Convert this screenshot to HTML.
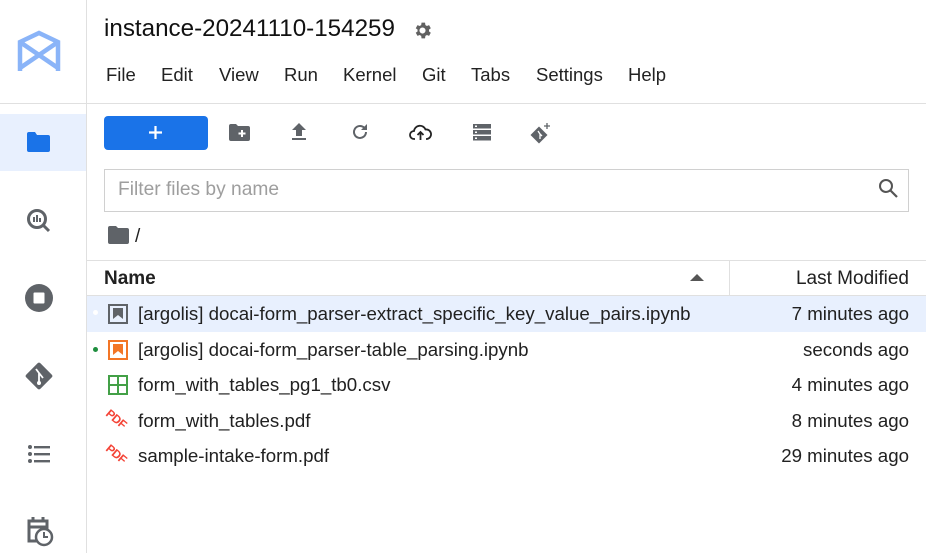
<!DOCTYPE html>
<html><head><style>
*{box-sizing:border-box;margin:0;padding:0}
body{width:926px;height:553px;overflow:hidden;background:#fff;font-family:"Liberation Sans",sans-serif;color:#212121;position:relative}
.abs{position:absolute}
.vl{left:86px;top:0;width:1px;height:553px;background:#e0e0e0}
.hl{left:0;top:103px;width:926px;height:1px;background:#e0e0e0}
.title{left:104px;top:15px;font-size:24.2px;color:#111}
.menu{top:64px;font-size:18.5px;color:#222}
.row{left:87px;width:839px;height:36px;font-size:18.7px;line-height:36px}
.row .n{position:absolute;left:51px}
.row .d{position:absolute;right:17px}
.pdf{position:absolute;left:18px;top:9px;color:#f44336;font-size:12px;font-weight:bold;transform:rotate(40deg);letter-spacing:-0.5px;line-height:14px}
</style></head><body>
<div class="abs vl"></div><div class="abs hl"></div>
<svg class="abs" style="left:17px;top:30px" width="44" height="42" viewBox="0 0 44 42"><path d="M3 41V12L22 3L41 12V41M3 12L41 38M41 12L3 38" fill="none" stroke="#8ab4f8" stroke-width="4.5"/></svg>
<div class="abs title">instance-20241110-154259</div>
<svg class="abs" style="left:412px;top:20px" width="21" height="21" viewBox="0 0 24 24"><path fill="#616161" d="M19.4 13a7.5 7.5 0 000-2l2.1-1.6-2-3.5-2.5 1a7 7 0 00-1.7-1L14.9 3h-4l-.4 2.9a7 7 0 00-1.7 1l-2.5-1-2 3.5L6.4 11a7.5 7.5 0 000 2l-2.1 1.6 2 3.5 2.5-1a7 7 0 001.7 1l.4 2.9h4l.4-2.9a7 7 0 001.7-1l2.5 1 2-3.5zM12 15.5a3.5 3.5 0 110-7 3.5 3.5 0 010 7z"/></svg>
<div class="abs menu" style="left:106px">File</div>
<div class="abs menu" style="left:161px">Edit</div>
<div class="abs menu" style="left:219px">View</div>
<div class="abs menu" style="left:284px">Run</div>
<div class="abs menu" style="left:343px">Kernel</div>
<div class="abs menu" style="left:422px">Git</div>
<div class="abs menu" style="left:471px">Tabs</div>
<div class="abs menu" style="left:536px">Settings</div>
<div class="abs menu" style="left:628px">Help</div>
<!-- sidebar -->
<div class="abs" style="left:0;top:114px;width:86px;height:57px;background:#e8f0fe"></div>
<svg class="abs" style="left:26px;top:131px" width="25" height="22" viewBox="0 0 25 22"><path fill="#1a73e8" d="M1 3a2 2 0 012-2h6l2 3h11a2 2 0 012 2v13a2 2 0 01-2 2H3a2 2 0 01-2-2z"/></svg>
<svg class="abs" style="left:26px;top:208px" width="26" height="26" viewBox="0 0 26 26"><circle cx="11" cy="11" r="8.5" fill="none" stroke="#5f6368" stroke-width="3"/><path d="M17 17l6 6" stroke="#5f6368" stroke-width="3"/><path d="M8 9v5M11 7v7M14 10v4" stroke="#5f6368" stroke-width="2"/></svg>
<svg class="abs" style="left:25px;top:284px" width="28" height="28"><circle cx="14" cy="14" r="14" fill="#5f6368"/><rect x="8.5" y="8.5" width="11" height="11" rx="1" fill="#fff"/></svg>
<svg class="abs" style="left:24px;top:361px" width="30" height="30" viewBox="0 0 30 30"><rect x="5" y="5" width="20" height="20" rx="2" transform="rotate(45 15 15)" fill="#5f6368"/><path d="M12 8l3 4v10M15 12l4 5" stroke="#fff" stroke-width="1.8" fill="none"/><circle cx="15" cy="22" r="2" fill="#fff"/></svg>
<svg class="abs" style="left:27px;top:444px" width="24" height="20"><g fill="#5f6368"><circle cx="3" cy="3" r="2"/><circle cx="3" cy="10" r="2"/><circle cx="3" cy="17" r="2"/><rect x="7" y="2" width="16" height="2.4"/><rect x="7" y="9" width="16" height="2.4"/><rect x="7" y="16" width="16" height="2.4"/></g></svg>
<svg class="abs" style="left:25px;top:515px" width="30" height="34" viewBox="0 0 30 34"><path d="M13 26H4V6h18v8M4 12h18M8 2v5M18 2v5" fill="none" stroke="#5f6368" stroke-width="3"/><circle cx="19" cy="22" r="8" fill="#fff" stroke="#5f6368" stroke-width="2.5"/><path d="M19 17v5h4" fill="none" stroke="#5f6368" stroke-width="2"/></svg>
<!-- toolbar -->
<div class="abs" style="left:104px;top:116px;width:104px;height:34px;background:#1a73e8;border-radius:4px"></div>
<svg class="abs" style="left:148px;top:125px" width="15" height="15"><path d="M7.5 1v13M1 7.5h13" stroke="#fff" stroke-width="2.2"/></svg>
<svg class="abs" style="left:229px;top:124px" width="21" height="17" viewBox="0 0 21 17"><path fill="#5f6368" d="M0 2a2 2 0 012-2h5l2 2h10a2 2 0 012 2v11a2 2 0 01-2 2H2a2 2 0 01-2-2z"/><path d="M13 6v7M9.5 9.5h7" stroke="#fff" stroke-width="2"/></svg>
<svg class="abs" style="left:291px;top:123px" width="16" height="18"><path fill="#5f6368" d="M8 0l7 7h-4v6H5V7H1z"/><rect x="1" y="15" width="14" height="2" fill="#5f6368"/></svg>
<svg class="abs" style="left:351px;top:123px" width="18" height="18" viewBox="0 0 18 18"><path d="M15 9a6 6 0 11-2-4.5" fill="none" stroke="#5f6368" stroke-width="2"/><path d="M16 1v6h-6z" fill="#5f6368"/></svg>
<svg class="abs" style="left:409px;top:124px" width="23" height="17" viewBox="0 0 23 17"><path d="M6 15H5a4 4 0 010-8 6 6 0 0111.5-1.5A4.5 4.5 0 0118 15h-1" fill="none" stroke="#222" stroke-width="1.8"/><path d="M11.5 16V8M8.5 11l3-3 3 3" fill="none" stroke="#222" stroke-width="1.8"/></svg>
<svg class="abs" style="left:473px;top:124px" width="18" height="17"><g fill="#5f6368"><rect y="0" width="18" height="4.5"/><rect y="6" width="18" height="4.5"/><rect y="12" width="18" height="4.5"/></g><g fill="#fff"><rect x="2" y="1.5" width="2" height="1.5"/><rect x="2" y="7.5" width="2" height="1.5"/><rect x="2" y="13.5" width="2" height="1.5"/></g></svg>
<svg class="abs" style="left:529px;top:122px" width="24" height="22" viewBox="0 0 24 22"><rect x="4" y="7" width="12" height="12" transform="rotate(45 10 13)" fill="#5f6368"/><path d="M9 9l2 3v5M11 12l2 2" stroke="#fff" stroke-width="1.3" fill="none"/><path d="M18 1v6M15 4h6" stroke="#5f6368" stroke-width="1.3"/></svg>
<!-- filter -->
<div class="abs" style="left:104px;top:169px;width:805px;height:43px;border:1px solid #d0d0d0"></div>
<div class="abs" style="left:118px;top:179px;font-size:19.2px;color:#9e9e9e">Filter files by name</div>
<svg class="abs" style="left:878px;top:178px" width="21" height="21" viewBox="0 0 21 21"><circle cx="8" cy="8" r="6" fill="none" stroke="#555" stroke-width="2"/><path d="M12.5 12.5l6.5 6.5" stroke="#555" stroke-width="2.2"/></svg>
<svg class="abs" style="left:108px;top:226px" width="21" height="18" viewBox="0 0 21 18"><path fill="#5f6368" d="M0 2a2 2 0 012-2h6l2 2h9a2 2 0 012 2v12a2 2 0 01-2 2H2a2 2 0 01-2-2z"/></svg>
<div class="abs" style="left:135px;top:226px;font-size:19px">/</div>
<!-- header -->
<div class="abs" style="left:87px;top:260px;width:839px;height:1px;background:#e0e0e0"></div>
<div class="abs" style="left:87px;top:295px;width:839px;height:1px;background:#e0e0e0"></div>
<div class="abs" style="left:729px;top:261px;width:1px;height:34px;background:#e0e0e0"></div>
<div class="abs" style="left:104px;top:268px;font-size:19px;font-weight:bold">Name</div>
<svg class="abs" style="left:690px;top:274px" width="14" height="8"><path d="M0 7L7 0l7 7z" fill="#555"/></svg>
<div class="abs" style="right:17px;top:268px;font-size:19px">Last Modified</div>
<!-- rows -->
<div class="abs row" style="top:296px;background:#e8f0fe"><span style="position:absolute;left:6px;top:14px;width:5px;height:5px;border-radius:50%;background:#fff"></span>
<svg style="position:absolute;left:21px;top:8px" width="20" height="20"><rect x="1" y="1" width="18" height="18" fill="none" stroke="#5f6368" stroke-width="2"/><path d="M5 4h10v11l-5-4-5 4z" fill="#5f6368"/></svg>
<span class="n">[argolis] docai-form_parser-extract_specific_key_value_pairs.ipynb</span><span class="d">7 minutes ago</span></div>
<div class="abs row" style="top:332px"><span style="position:absolute;left:6px;top:15px;width:5px;height:5px;border-radius:50%;background:#1e8e3e"></span>
<svg style="position:absolute;left:21px;top:8px" width="20" height="20"><rect x="1" y="1" width="18" height="18" fill="none" stroke="#f37626" stroke-width="2"/><path d="M5 4h10v11l-5-4-5 4z" fill="#f37626"/></svg>
<span class="n">[argolis] docai-form_parser-table_parsing.ipynb</span><span class="d">seconds ago</span></div>
<div class="abs row" style="top:367px">
<svg style="position:absolute;left:21px;top:8px" width="20" height="20"><rect x="1" y="1" width="18" height="18" fill="none" stroke="#43a047" stroke-width="2"/><path d="M10 1v18M1 10h18" stroke="#43a047" stroke-width="2"/></svg>
<span class="n">form_with_tables_pg1_tb0.csv</span><span class="d">4 minutes ago</span></div>
<div class="abs row" style="top:403px"><span class="pdf">PDF</span><span class="n">form_with_tables.pdf</span><span class="d">8 minutes ago</span></div>
<div class="abs row" style="top:438px"><span class="pdf">PDF</span><span class="n">sample-intake-form.pdf</span><span class="d">29 minutes ago</span></div>
</body></html>
